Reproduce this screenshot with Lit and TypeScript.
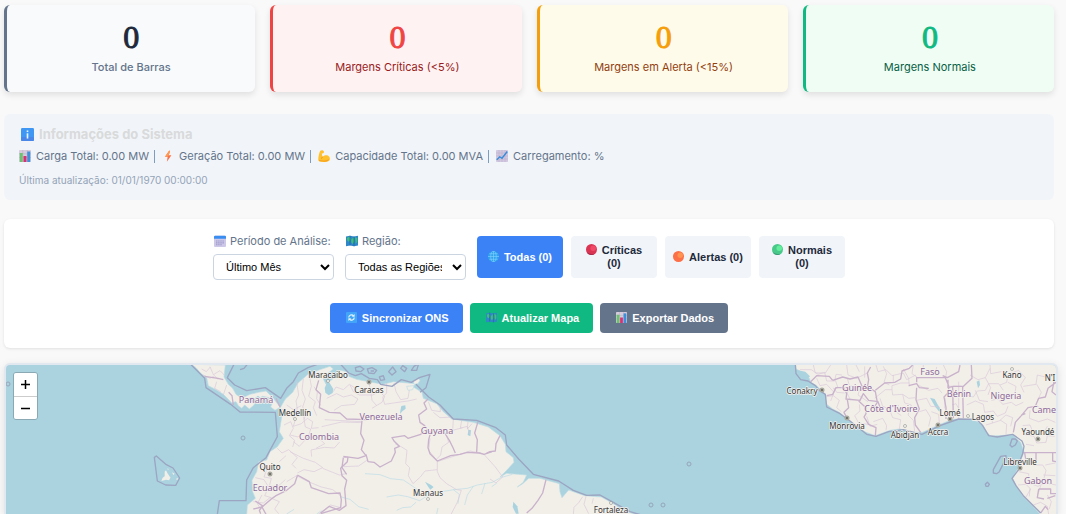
import { LitElement, html, svg, css } from "lit";
import { customElement, state } from "lit/decorators.js";

const ICONS: Record<string, unknown> = {
  info: svg`<rect x="0" y="0" width="16" height="16" rx="1.5" fill="#3f97f3"/><rect y="11" width="16" height="5" rx="1.5" fill="#4a86e8"/><rect x="7" y="6.5" width="2" height="6.5" fill="#e8f5ff"/><rect x="7" y="3" width="2" height="2" fill="#e8f5ff"/>`,
  bars: svg`<rect width="16" height="16" rx="1" fill="#d6ccdc"/><path d="M0 5h16M0 10h16M5 0v16M11 0v16" stroke="#b9adc6" stroke-width=".7"/><rect x="1" y="4" width="4" height="12" fill="#69c46d"/><rect x="6" y="8" width="4" height="8" fill="#dc2f72"/><rect x="11" y="2" width="4" height="14" fill="#3d8fd9"/>`,
  bolt: svg`<path d="M9.500 1 4 9h3.500L6.500 15.500l6-8.500H9L10.800 1z" fill="#fb7048"/><path d="M9.500 1 4 9h3.500l1.500-2L10.800 1z" fill="#ff9b50"/>`,
  arm: svg`<path d="M3 1c2-1.500 5-.5 5 1.500 0 1.500-1.500 2-3 2L6 9c2-2.500 7-3 9 0s.500 6-3 6.500c-4 .8-9 .5-11-1C-.5 13 1 5 3 1z" fill="#ffc02e"/><path d="M1 13c4 1.500 9 1.500 14-1-1 3-4 3.500-7 3.500S1 15.500 1 13z" fill="#f5a022"/><path d="M6 9c-.5 1.500-1 2-2 2.500" stroke="#e28a1c" fill="none"/>`,
  chart: svg`<rect width="16" height="16" rx="1" fill="#d2c8df"/><path d="M0 4h16M0 8h16M0 12h16M4 0v16M8 0v16M12 0v16" stroke="#b8abc9" stroke-width=".6"/><path d="m1 13 4-4 3 2 7-9" stroke="#368cdb" stroke-width="1.800" fill="none"/>`,
  calendar: svg`<rect x="0" y="1" width="16" height="15" rx="1.500" fill="#cdc7e8"/><path d="M0 5V2.500Q0 1 1.500 1h13Q16 1 16 2.500V5z" fill="#3a8df0"/><path d="M3 8h10M3 10.500h10M3 13h8" stroke="#8f8bc0" stroke-width="1.500" stroke-dasharray="1.500 1.300"/>`,
  map: svg`<path d="M0 2 5.300 1 10.700 2 16 1v13l-5.300 1-5.400-1L0 15z" fill="#2f86c9"/><path d="M1 4l4-2 1 4-2 3-2-1zM7 6l3-3 1 5-2 4-2-2zM12 3l3 1v5l-2 3z" fill="#3fbf7a"/><path d="M5.300 1v13M10.700 2v13" stroke="#1d5f9c" stroke-width=".8"/>`,
  globe: svg`<circle cx="8" cy="8" r="8" fill="#2fa1ee"/><path d="M0 8h16M8 0v16M2 4h12M2 12h12" stroke="#83d1ff" stroke-width=".9" fill="none"/><ellipse cx="8" cy="8" rx="4" ry="8" stroke="#83d1ff" fill="none" stroke-width=".9"/>`,
  red: svg`<circle cx="8" cy="8" r="8" fill="#d93553"/><circle cx="10.500" cy="6" r="4" fill="#f04a68"/><path d="M1 12a8 8 0 0 0 11 3C6 15 3 13 1 12z" fill="#a52c4c"/>`,
  orange: svg`<circle cx="8" cy="8" r="8" fill="#fc6f47"/><circle cx="10.500" cy="6" r="4" fill="#ff9350"/>`,
  green: svg`<circle cx="8" cy="8" r="8" fill="#48c98a"/><circle cx="10.500" cy="6" r="4" fill="#62ee9a"/><path d="M1 12a8 8 0 0 0 11 3C6 15 3 13 1 12z" fill="#3f9b7a"/>`,
  sync: svg`<rect width="16" height="16" rx="1.500" fill="#42a5f7"/><path d="M4 8a4 4 0 0 1 7-2.500M12 8a4 4 0 0 1-7 2.500" stroke="#e9f6ff" stroke-width="1.700" fill="none"/><path d="M12.500 3v4h-4zM3.500 13V9h4z" fill="#e9f6ff"/>`,
};

const icon = (name: string, size = "") =>
  html`<svg class="icon ${size}" viewBox="0 0 16 16" aria-hidden="true">${ICONS[name]}</svg>`;

/* Traced at three units per map pixel. */
const AMERICAS = {
  land: [
    "M-145 28-132 38-118 55-100 68-95 92-72 104-50 118-38 130-25 143-12 140-5 152 5 160 14 150 28 162 42 150 52 132 68 124 88 128 98 142 92 156 105 166 122 156 136 132 158 112 174 84 204 58 234 46 270 34 280 42 262 56 250 72 258 88 278 72 302 46 320 50 326 64 350 73 386 80 428 88 460 80 526 86 520 96 546 112 550 130 590 146 610 170 635 192 700 202 745 216 780 242 796 268 798 290 820 308 822 322 800 346 780 366 800 355 824 357 860 360 850 382 832 396 848 386 866 370 900 370 958 386 960 410 966 428 986 405 1034 422 1084 426 1118 445 1150 466 1190 480H20L22 450 46 430 38 410 36 376 50 350 56 320 80 315 90 290 112 275 130 250 118 230 126 180 120 156 100 130 78 108 55 112 30 118 5 130-12 118-22 100-35 88-48 66-44 30z",
    "M500 94l22-2-4 12-14 2zM520 78l14-8 6 6-6 10-12 2z",
  ],
  water: [
    "M262 80q8 2 12 12l6 10-2 12-12 7-10-8-2-14z",
    "M484 153l12-2 1 10-10 8-7 8 1-10z",
    "M685 224l8 2-2 18-8-4zM555 380l18 10 8 6-10 8-6-8z",
    "M820 440l12 14 4 22h-8l-10-20z",
    "M20 132q15-9 24-2l10-8 12 10-24 14z",
  ],
  rivers: [
    "M375 356l45 3 32 12 38 4 30 20 30 22 30 0 30-8 32-5 40-4 30-10 45-8 25-14 35-10",
    "M440 426l35-6 28 5 36 12 22-14 20-8M470 466l18-8 24-2 16-14",
    "M640 404l18 14-4 28M700 394l-18 26-8 30M735 385l-10 32M590 477l4-18M770 385l-15 10",
    "M300 425l30 8 26 22 30 8M140 477l22-14M230 477l14-10",
  ],
  states: [
    "M-110 60l20 10 14-8 10 12M-70 80l-6 20 18 10M-40 90l-10 30M-90 35l10 24 20-12 14 14M-115 42l14 8 12-14",
    "M170 80l6 40-8 18 4 24-10 20M190 72l-4 34 10 26-8 24 10 20-6 18M208 60l6 34-8 30 20 16-6 18 10 24M222 95l10 16-2 20 12 20",
    "M260 130l30-14 20 10 24-6 20 12-10 16-40 4-22 14M280 110l8-14 22 8 18-16 22 14M330 90l10 20 18 10 40 0 20-10 16 14-8 18-20 12-10 6M388 88l4 20 4 28 14 16M440 84l0 30-12 12 6 22 40-6 30-4 26-6M462 84l6 26 14 24 22-4 4-24",
    "M124 162l22 12 20 20-6 20 24-8 18-16 16 10-4 20 22-2M132 210l20-10 8 20-12 22 16 14-6 20M112 280l14 14 20-10 26 24-16 20 12 12M118 320l20-18M160 260l18 14 26-28 28 0 22 20-26 14M215 305l-2-20 40-8 30 2 16-18M150 290l40 20 36 12 22 16-26 12-30-6-20 10",
    "M254 194l70 4 40 2M245 215l60-14 60 2M190 180l6 36 16 6-8 26M140 150l20 14 24-12M150 240l24 6 14-14",
    "M312 335l44-2 26-18M248 340l50 20 20-4M232 480l40-30 30 8M140 380l30-18 30 16 44 18 34 8 26 20",
    "M60 330l20 14-8 22 22 4-6 24 26 0 22-20M46 368l26 6 14 22-12 26 20 6M40 440l30 4 20-16 28 12-14 22 12 14M66 420l-14 26 10 16",
    "M465 266l20 10 16 10-4 40 12 12-4 24 14 24 22-20 14-18 36-4M592 320l0 30 8 18 20 18 30 18 14 2M592 320q60-20 98-32l40 8 36 40 22 30-20 18-18-12",
    "M664 406l-12 36-20 38M565 140l10 26 26 4 0-20M580 172l20 16 40-2M640 192l-2 34 30-8M665 196l-4 24 20-6 8 22M684 200l-2 22 14-16",
    "M570 250l-4 36 26 32M618 236l8 26-20 14-4 24-12 12",
    "M1000 477l2-20 14-14 12-18M1038 424l-6 24 14 28M1060 430l-4 16",
  ],
  borders: [
    "M236 76l-8 28 14 14-4 40 30 14 32 2 20 18 62 2M366 196l-4 40 10 20-8 28 14 18-24 8-44-6M310 306l14 0-2 14-20 20 4 22 14 14-6 26 4 50-20 14-30-12-26 20",
    "M378 298l6 22 18 2 18 14 34-18 12-26-2-12 14-6-16-16-6-10 38-6 10 8 38-12 10-8",
    "M564 132l-12 12 8 18-24 18 4 22 14 10 10 16 8 4-6 22-2 24 6 18 22 22 40-16 28-4 22-6 36 2 14 4 24-8",
    "M614 234l14 22 10 20 8 18M714 200l-10 34 8 20-2 38M780 242l-12 24-2 22-16 2-10 4",
    "M310 308l-4 30 14 20M172 360l36 20 6 18 52 18 34-2 4 20-2 24-60 18M172 362l-8 24-24 20-32 16-14 10-28 24-8 10 4 10",
    "M-106 64l40 6 16 4M-20 150l-4-28-10-10M108 130l12 26M70 454l-24-16M40 462l26-6 12 22",
    "M918 374l-10 40-14 22-18 24-16 14",
  ],
  sea: [
    "M-148 28-106 70-102 98-28 148 0 171 106 172 112 245 78 308 40 338 20 375 18 437-62 437-68 478",
    "M-18 28-38 68-16 90 20 107 76 98 122 130 140 100 160 80 175 54 204 38 230 29",
    "M0 44l12-4 10-12M302 28l24 26 20 8 18-6 24 14 24 4 10 14 34 6 28-20 30 8 24-14 32-10-12 40-18 14",
    "M346 38l14-4 12 8-10 8-14-2zM382 42l14-4 14 8-8 10-16-2zM392 48l10 0M418 66l12-4 4 12-12 2zM446 50l12-14 10 14-12 10zM482 40l6-8 12 8-6 10zM514 46l8-12 14-8-6 20z",
    "M528 88 566 126 600 150 640 192 710 196 768 218 796 240 800 270 836 312 880 358 956 378 1000 406 1040 421 1080 420 1120 442 1170 470 1205 480",
    "M-257 307l6-4 30 26 20 10 20 30-12 22-30-1-25-12z",
  ],
  dots: [
    "M-226 350l4-4 4 8 8 12-2 10-10-2-14 4 4-10 6-4zM-218 340l4 2-2 4zM-204 352l8 4-4 4zM-214 365l6 2-3 5zM-192 372l6-4-2 8z",
  ],
};

const AFRICA = {
  land: "M76 28H862V480H812L790 455 760 425 738 392 728 370 744 340 762 290 752 262 728 240 662 243 650 232 636 206 604 193 548 193 506 210 458 232 422 232 390 222 360 226 316 242 288 232 256 214 232 192 208 172 188 162 170 148 166 118 140 92 122 82 118 70 98 60 90 48 78 42z",
  water: ["M620 80l8-4 2 14-6 10zM480 128l14 4 10 18 8 12-4 8-12-14zM84 46l22 4 14 14-10 12-18-8z"],
  states: [
    "M90 44l34 0 20 14 20-6 6 26 24 0 4-20 18 2M130 30l6 24 30 0 16-24M140 70l10 22 20-4 22 24-10 26M230 30l4 30 26 10 36-18M258 30l10 20M284 34l0 34",
    "M166 126l24-4 18 14-8 22 14 12M190 98l10 14 24 2M236 96l-4 20 10 20M196 76l8 22-14 4M232 70l6 22 28 6 20-6M270 100l-6 20 30 20",
    "M314 130l32-26 20 0 2 16 30-2 18 12 20-2M366 104l0-12 26-8 26 0M330 130l8 24 20 8 10 26 24 6-4 28M310 200l28-10 12 22-2 14M398 118l6 26 20 6-10 30 16 16 4 32M268 148l2 20-16 14 12 22 28 4M290 184l10 30 22-6M386 150l-12 18 20 14",
    "M318 30l6 20 24-6 18 18 34-8 10 20 28-14M340 34l10 22-8 26 16 8M370 60l0 24M400 42l16 28 2 24M430 30l-4 26 20 14M460 30l0 16M500 36l-4 26M520 30l10 20-4 20",
    "M448 92l28 14 28-6 12 14M440 136l30-6 12 24 26 2M448 170l20-6 14 24-6 26M484 170l22 8 2 28M526 130l-2 30M540 94l34 0M566 80l0 112M588 120l22 6 12-18 24-2 10-20 30 0 14 20M546 150l12-4 8 14",
    "M590 150l26-12 24 10 4 24M616 106l12 30 26 4M600 60l24 14 22-6 14-28M660 30l2 26 32-6M646 68l16 30-8 22M690 90l20-8 4-24 32-12 20 22-14 22 10 22M714 82l24 12-4 26M760 94l38-6 4-28 24 6M800 88l14 24-12 26M664 136l20-4 14 16 26-6 14 10 22-10M644 172l26-4 12 16 24-10 8-20M662 180l6 24-20 6M668 204l24-8 18 12-2 30M690 196l18-16 20 8-6 26",
    "M780 166l-2 24 28 10 26-8 24 10M800 150l16 14M758 212l22-2 12 28 28-2 12-22M762 238l30 6 8 20 28-2 4-20 22 2M768 268l24 4",
    "M768 314l20-2 2 18 28 0 10 16-6 24M746 350l30 6 0 28 28 10 22-10 32 6M744 390l24-2 14 14-14 24M780 400l-2 24M812 392l-8 26M826 330l30-6M820 360l36 2M790 450l22-8 20 12 4 24M832 420l12 20-6 22",
  ],
  borders: [
    "M122 80l18-18 38 2 10 12M170 122l18-4 10-20 24 0 8 18-2 16 42 4 10-20 16 20 28 4 10 28M232 134l4 24-14 14 8 16M266 138l22 20 0 18-6 10 14 22 22 10-2 24",
    "M188 76l30-10 22 6 24-6 12 28 16 4 4-24-4-20 10-18M294 96l22 14 6 32-8 12M316 106l28-22 30-2 18-10 4-24 22-8 10-10M416 92l24-6 8 12 28 2M440 98l-2 36 10 28-14 26 2 22 16 22M440 82l0-14 86 0 10 24 0 20-14 14 6 32 0 34M518 62l14 6 34-18 4-20M548 96l2 94M534 74l0 24 16-4 30 0M578 96l2 94M578 96l28-26-2-40",
    "M730 232l6-30 18-20 20-24 22-4 10-24 20-4 8-26 24-18M754 180l12-4M852 80l-6 30 12 10M758 293l100 0M764 294l4 24 30-2 0-22M848 294l0 24 12 2M806 402l36 0 0 14 16 0M806 402l-4 26 20 4M832 430l24-8M812 474l14-20 8 10",
  ],
  sea: [
    "M76 28 78 56 92 74 114 78 136 92 148 106 166 118 170 156 210 176 240 198 290 238 318 244 356 230 400 224 456 238 510 212 566 192 620 193 638 212 656 242 682 246 728 238 756 258 762 274 758 296 746 326 746 344 726 370 738 392 760 422 812 474",
    "M692 304l-22 40 0 10 10 2 8-6 20-40 0-8zM726 252l10 0 6 6-6 12-10 6-6-6zM646 388l6-6 6 6-4 6-6 0z",
  ],
};

interface Place { name: string; x: number; y: number }
const COUNTRIES: Place[] = [
  { name: "Panamá", x: 256, y: 403 }, { name: "Venezuela", x: 381, y: 420 },
  { name: "Colombia", x: 319, y: 440 }, { name: "Guyana", x: 437, y: 434 },
  { name: "Ecuador", x: 270, y: 491 }, { name: "Guinée", x: 857, y: 391 },
  { name: "Côte d'Ivoire", x: 891, y: 412 }, { name: "Faso", x: 930, y: 375 },
  { name: "Bénin", x: 959, y: 397 }, { name: "Nigeria", x: 1006, y: 399 },
  { name: "Gabon", x: 1038, y: 484 }, { name: "Came", x: 1044, y: 413 },
];
const CITIES: Place[] = [
  { name: "Maracaibo", x: 328, y: 378 }, { name: "Caracas", x: 369, y: 393 },
  { name: "Medellín", x: 295, y: 416 }, { name: "Quito", x: 270, y: 470 },
  { name: "Manaus", x: 428, y: 496 }, { name: "Fortaleza", x: 611, y: 513 },
  { name: "Conakry", x: 802, y: 394 }, { name: "Monrovia", x: 847, y: 429 },
  { name: "Abidjan", x: 905, y: 438 }, { name: "Accra", x: 938, y: 435 },
  { name: "Lomé", x: 950, y: 416 }, { name: "Lagos", x: 983, y: 420 },
  { name: "Kano", x: 1012, y: 378 }, { name: "Yaoundé", x: 1038, y: 435 },
  { name: "Libreville", x: 1020, y: 465 }, { name: "N'I", x: 1050, y: 381 },
];
const CAPITALS = [[369, 382], [270, 474], [822, 390], [847, 418], [938, 425], [950, 419], [1038, 439], [1020, 468]];
const TOWNS = [[328, 381], [295, 419], [428, 499], [611, 503], [905, 426], [968, 416], [1012, 369]];
const ISLETS = [[8, 384], [243, 438], [689, 464], [651, 505], [663, 505]];

@customElement("app-root")
export class AppRoot extends LitElement {
  @state() private filter = "todas";

  static styles = css`
    :host {
      display: flex;
      flex-direction: column;
      box-sizing: border-box;
      height: 100vh;
      overflow: hidden;
      padding: 5px 12px 0 4px;
      background: #f9f9f9;
      font-family: Inter, "Liberation Sans", sans-serif;
      font-size: 11px;
      color: #64748b;
    }
    * { box-sizing: border-box; }
    .icon { width: 12px; height: 12px; flex: none; }
    .icon.large { width: 13px; height: 13px; }
    .icon.small { width: 11px; height: 11px; vertical-align: -1px; margin-right: 5px; }
    .cards { display: grid; grid-template-columns: repeat(4, 1fr); gap: 15px; }
    .card {
      padding: 14px 12px 17px;
      border-left: 3px solid #64748b;
      border-radius: 6px;
      background: #f8fafc;
      box-shadow: 0 3px 6px rgba(0, 0, 0, 0.1);
      text-align: center;
    }
    .value {
      font-family: "Liberation Serif", serif;
      font-size: 32px;
      line-height: 36px;
      color: #1e293b;
      -webkit-text-stroke: 1px currentColor;
    }
    .caption { margin-top: 4px; line-height: 16px; font-weight: 500; }
    .critical, .alert, .normal { --caption-weight: 400; }
    .critical .caption, .alert .caption, .normal .caption { font-weight: 400; }
    .critical { background: #fef2f2; border-color: #ef4444; }
    .critical .value { color: #ef4444; }
    .critical .caption { color: #991b1b; }
    .alert { background: #fffbeb; border-color: #f59e0b; }
    .alert .value { color: #f59e0b; }
    .alert .caption { color: #92400e; }
    .normal { background: #f0fdf4; border-color: #10b981; }
    .normal .value { color: #10b981; }
    .normal .caption { color: #065f46; }
    .info {
      margin-top: 22px;
      padding: 12px 15px;
      border-radius: 6px;
      background: #f1f5f9;
    }
    .info h2 {
      display: flex;
      align-items: center;
      gap: 5px;
      margin: 0;
      padding-left: 2px;
      font-size: 13px;
      line-height: 17px;
      font-weight: 700;
      color: #d9dadb;
    }
    .stats { display: flex; align-items: center; margin: 5px 0 0; line-height: 16px; }
    .stat { display: flex; align-items: center; gap: 5px; }
    .stat + .stat { margin-left: 5px; padding-left: 7px; border-left: 1px solid #7c9cc0; line-height: 13px; }
    .updated { margin: 8px 0 0; font-size: 10px; line-height: 16px; color: #94a3b8; }
    .panel {
      margin-top: 19px;
      padding: 14px 15px 15px;
      border-radius: 6px;
      background: #fff;
      box-shadow: 0 1px 3px rgba(0, 0, 0, 0.1);
    }
    .filters, .actions { display: flex; justify-content: center; }
    .filters { gap: 11px; }
    .field { display: flex; flex-direction: column; gap: 5px; width: 121px; }
    .field label { display: flex; align-items: center; gap: 4px; padding-left: 1px; line-height: 16px; white-space: nowrap; }
    select {
      width: 100%;
      height: 26px;
      padding: 0 7px 0 8px;
      border: 1px solid #cbd5e1;
      border-radius: 4px;
      background: #fff;
      font: 11px "Liberation Sans", sans-serif;
      color: #000;
    }
    .toggles { display: grid; grid-template-columns: repeat(4, 86px); gap: 8px; padding: 3px 0 2px; }
    button { border: 0; font: bold 11px/13px "Liberation Sans", sans-serif; cursor: pointer; }
    .toggle { padding: 0 7px; border-radius: 4px; background: #f1f5f9; color: #1e293b; }
    .toggle.on { background: #3b82f6; color: #fff; }
    .actions { gap: 7px; margin-top: 23px; }
    .action { height: 30px; padding: 0 14px 0 16px; border-radius: 4px; color: #fff; background: #3b82f6; }
    .refresh { background: #10b981; }
    .export { background: #64748b; }
    .map {
      position: relative;
      flex: 1;
      min-height: 0;
      margin: 15px -4px 0 0;
      border: 2px solid #e2e8f0;
      border-bottom: 0;
      border-radius: 6px 6px 0 0;
      overflow: hidden;
      background: #aad3df;
      box-shadow: 0 2px 8px rgba(0, 0, 0, 0.1);
    }
    .tiles { display: block; width: 100%; height: 100%; }
    .zoom {
      position: absolute;
      top: 7px;
      left: 7px;
      display: flex;
      flex-direction: column;
      border: 1px solid #8aa9b4;
      border-radius: 3px;
      overflow: hidden;
    }
    .zoom button { display: grid; place-items: center; width: 23px; height: 22px; padding: 0; background: #fff; }
    .zoom button:first-child { height: 24px; border-bottom: 1px solid #ccc; }
    .glyph { width: 11px; height: 11px; stroke: #000; stroke-width: 1.5; }
    .land { fill: #f2efe9; }
    .shore { stroke: #bcdce4; stroke-width: 2; }
    .water { fill: #aad3df; }
    .river { fill: none; stroke: #b9dce5; stroke-width: 2; }
    .state { fill: none; stroke: #d9c9da; stroke-width: 2; stroke-linejoin: round; }
    .border { fill: none; stroke: #c9b2cb; stroke-width: 4; stroke-linejoin: round; }
    .sea { fill: none; stroke: #9ca5c1; stroke-width: 4; stroke-linejoin: round; }
    .islet { fill: none; stroke: #95a5bb; stroke-width: 1; }
    .town { fill: #f8f8f4; stroke: #8c8c86; stroke-width: 0.6; }
    .capital { fill: #66665f; stroke: #a9a9a0; stroke-width: 1.4; }
    .country, .city {
      font-family: "Noto Sans", sans-serif;
      text-anchor: middle;
      paint-order: stroke;
      stroke: #f5f2ee;
      stroke-width: 1.5;
      stroke-linejoin: round;
    }
    .country { font-size: 9px; fill: #8d6a99; }
    .city { font-size: 8px; fill: #333; }
  `;

  private card(kind: string, caption: string) {
    return html`<div class="card ${kind}"><div class="value">0</div><div class="caption">${caption}</div></div>`;
  }

  private toggle(id: string, glyph: string, text: string) {
    return html`<button class="toggle ${this.filter === id ? "on" : ""}" aria-pressed=${this.filter === id}
      @click=${() => (this.filter = id)}>${icon(glyph, "small")}${text}</button>`;
  }

  private lines(paths: string[], kind: string) {
    return paths.map((d) => svg`<path class=${kind} d=${d}/>`);
  }

  private tiles() {
    return html`<svg class="tiles" viewBox="6 365 1050 149" preserveAspectRatio="xMinYMin slice" role="img" aria-label="Mapa">
      <g transform="translate(240 355) scale(.33333)">
        ${this.lines(AMERICAS.land, "land shore")}${this.lines(AMERICAS.water, "water")}
        ${this.lines(AMERICAS.rivers, "river")}${this.lines(AMERICAS.states, "state")}
        ${this.lines(AMERICAS.borders, "border")}${this.lines(AMERICAS.sea, "sea")}
        ${this.lines(AMERICAS.dots, "land")}
      </g>
      <g transform="translate(770 355) scale(.33333)">
        <path class="land shore" d=${AFRICA.land}></path>
        ${this.lines(AFRICA.water, "water")}${this.lines(AFRICA.states, "state")}
        ${this.lines(AFRICA.borders, "border")}${this.lines(AFRICA.sea, "sea")}
      </g>
      ${ISLETS.map(([x, y]) => svg`<circle class="islet" cx=${x} cy=${y} r="2"/>`)}
      ${TOWNS.map(([x, y]) => svg`<circle class="town" cx=${x} cy=${y} r="1.500"/>`)}
      ${CAPITALS.map(([x, y]) => svg`<circle class="capital" cx=${x} cy=${y} r="1.800"/>`)}
      ${COUNTRIES.map((p) => svg`<text class="country" x=${p.x} y=${p.y}>${p.name}</text>`)}
      ${CITIES.map((p) => svg`<text class="city" x=${p.x} y=${p.y}>${p.name}</text>`)}
    </svg>`;
  }

  render() {
    return html`
      <section class="cards">
        ${this.card("", "Total de Barras")}
        ${this.card("critical", "Margens Críticas (<5%)")}
        ${this.card("alert", "Margens em Alerta (<15%)")}
        ${this.card("normal", "Margens Normais")}
      </section>
      <section class="info">
        <h2>${icon("info", "large")}Informações do Sistema</h2>
        <div class="stats">
          <span class="stat">${icon("bars")}Carga Total: 0.00 MW</span>
          <span class="stat">${icon("bolt")}Geração Total: 0.00 MW</span>
          <span class="stat">${icon("arm")}Capacidade Total: 0.00 MVA</span>
          <span class="stat">${icon("chart")}Carregamento: %</span>
        </div>
        <p class="updated">Última atualização: 01/01/1970 00:00:00</p>
      </section>
      <section class="panel">
        <div class="filters">
          <div class="field">
            <label for="period">${icon("calendar")}Período de Análise:</label>
            <select id="period"><option>Último Mês</option></select>
          </div>
          <div class="field">
            <label for="region">${icon("map")}Região:</label>
            <select id="region"><option>Todas as Regiões</option></select>
          </div>
          <div class="toggles">
            ${this.toggle("todas", "globe", "Todas (0)")}
            ${this.toggle("criticas", "red", "Críticas (0)")}
            ${this.toggle("alertas", "orange", "Alertas (0)")}
            ${this.toggle("normais", "green", "Normais (0)")}
          </div>
        </div>
        <div class="actions">
          <button class="action">${icon("sync", "small")}Sincronizar ONS</button>
          <button class="action refresh">${icon("map", "small")}Atualizar Mapa</button>
          <button class="action export">${icon("bars", "small")}Exportar Dados</button>
        </div>
      </section>
      <section class="map">
        ${this.tiles()}
        <div class="zoom">
          <button aria-label="Aumentar zoom"><svg class="glyph" viewBox="0 0 11 11"><path d="M1 5.500h9M5.500 1v9"/></svg></button>
          <button aria-label="Diminuir zoom"><svg class="glyph" viewBox="0 0 11 11"><path d="M1 5.500h9"/></svg></button>
        </div>
      </section>
    `;
  }
}
